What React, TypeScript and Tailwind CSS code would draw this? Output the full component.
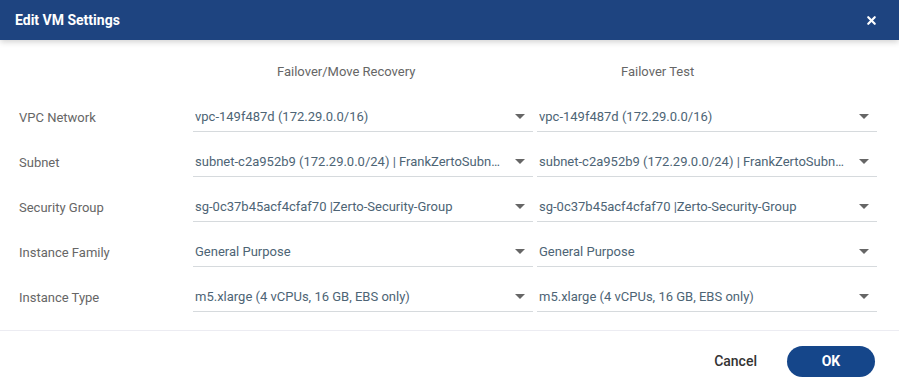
import { X } from 'lucide-react';

const rows = [
  { label: 'VPC Network', value: 'vpc-149f487d (172.29.0.0/16)' },
  { label: 'Subnet', value: 'subnet-c2a952b9 (172.29.0.0/24) | FrankZertoSubnet-Public' },
  { label: 'Security Group', value: 'sg-0c37b45acf4cfaf70 |Zerto-Security-Group' },
  { label: 'Instance Family', value: 'General Purpose' },
  { label: 'Instance Type', value: 'm5.xlarge (4 vCPUs, 16 GB, EBS only)' },
];

function Select({ value }: { value: string }) {
  return (
    <div className="w-[340px] h-[30px] flex items-center border-b border-[#d6dadd] pl-[2px] pr-[8px]">
      <span className="flex-1 truncate text-[#4d6475] pt-[1px]">{value}</span>
      <svg width="10" height="6" viewBox="0 0 10 6" className="ml-[14px] shrink-0">
        <path d="M0 0 L10 0 L5 5 Z" fill="#666" />
      </svg>
    </div>
  );
}

export default function App() {
  return (
    <div className="w-[899px] h-[392px] bg-white flex flex-col text-[13px] font-['Roboto',sans-serif]">
      <header className="h-[40px] shrink-0 bg-[#1e4480] px-[15px] flex items-center justify-between shadow-[0_2px_6px_rgba(0,0,0,0.18)] relative z-10">
        <h1 className="text-white font-bold text-[14px]">Edit VM Settings</h1>
        <X size={13} strokeWidth={4} className="text-white mr-[6px]" />
      </header>
      <main className="flex-1 pt-[17px] pl-[19px] flex flex-col gap-[15px]">
        <div className="flex h-[30px] items-center text-[#666]">
          <div className="w-[174px]" />
          <div className="w-[340px] pl-[84px]">Failover/Move Recovery</div>
          <div className="w-[340px] ml-[4px] pl-[84px]">Failover Test</div>
        </div>
        {rows.map((r) => (
          <div key={r.label} className="flex h-[30px] items-center">
            <div className="w-[174px] text-[#666] pt-[1px]">{r.label}</div>
            <Select value={r.value} />
            <div className="ml-[4px]">
              <Select value={r.value} />
            </div>
          </div>
        ))}
      </main>
      <footer className="h-[62px] shrink-0 border-t border-[#ececf2] flex items-center justify-end pr-[24px] gap-[30px]">
        <button className="text-[14px] font-medium text-[#333]">Cancel</button>
        <button className="w-[88px] h-[31px] rounded-full bg-[#15468a] text-white font-bold text-[14px]">OK</button>
      </footer>
    </div>
  );
}
